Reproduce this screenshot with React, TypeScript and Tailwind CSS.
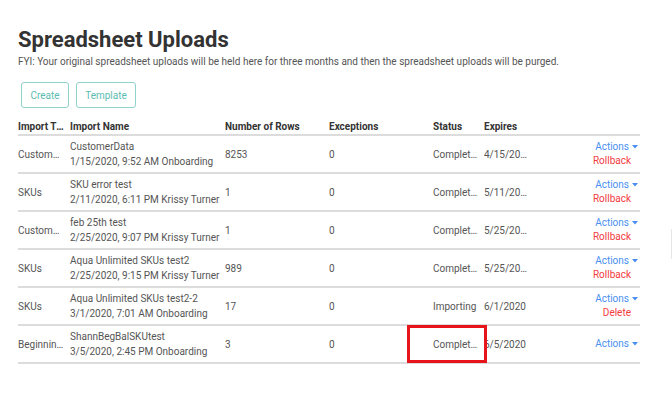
import React from "react";

type Row = {
  type: string;
  name: string;
  meta: string;
  rows: string;
  exceptions: string;
  status: string;
  expires: string;
  action?: string;
};

const rows: Row[] = [
  { type: "CustomerData", name: "CustomerData", meta: "1/15/2020, 9:52 AM Onboarding", rows: "8253", exceptions: "0", status: "Completed", expires: "4/15/2020", action: "Rollback" },
  { type: "SKUs", name: "SKU error test", meta: "2/11/2020, 6:11 PM Krissy Turner", rows: "1", exceptions: "0", status: "Completed", expires: "5/11/2020", action: "Rollback" },
  { type: "CustomerData", name: "feb 25th test", meta: "2/25/2020, 9:07 PM Krissy Turner", rows: "1", exceptions: "0", status: "Completed", expires: "5/25/2020", action: "Rollback" },
  { type: "SKUs", name: "Aqua Unlimited SKUs test2", meta: "2/25/2020, 9:15 PM Krissy Turner", rows: "989", exceptions: "0", status: "Completed", expires: "5/25/2020", action: "Rollback" },
  { type: "SKUs", name: "Aqua Unlimited SKUs test2-2", meta: "3/1/2020, 7:01 AM Onboarding", rows: "17", exceptions: "0", status: "Importing", expires: "6/1/2020", action: "Delete" },
  { type: "Beginning Balances", name: "ShannBegBalSKUtest", meta: "3/5/2020, 2:45 PM Onboarding", rows: "3", exceptions: "0", status: "Completed", expires: "6/5/2020" },
];

// truncated cells, like the original grid
const cut = "whitespace-nowrap overflow-hidden text-ellipsis pr-[6px]";

const App = () => {
  return (
    <div
      className="relative w-[672px] h-[414px] bg-white text-[#555] overflow-hidden"
      style={{ fontFamily: "Roboto, 'Liberation Sans', sans-serif" }}
    >
      <div className="pl-[18px] pr-[32px] pt-[26px]">
        <h1 className="text-[22px] leading-[28px] font-bold text-[#333]">Spreadsheet Uploads</h1>
        <p className="text-[10px] leading-[14px] mt-[1px]">
          FYI: Your original spreadsheet uploads will be held here for three months and then the spreadsheet uploads will be purged.
        </p>

        <div className="flex gap-[7px] ml-[3px] mt-[13px]">
          <button className="h-[26px] w-[48px] border border-[#8fd3ca] rounded-[3px] text-[10px] text-[#5cbcb0]">
            Create
          </button>
          <button className="h-[26px] w-[60px] border border-[#8fd3ca] rounded-[3px] text-[10px] text-[#5cbcb0]">
            Template
          </button>
        </div>

        <table className="w-[622px] table-fixed mt-[13px] text-[10px] border-collapse">
          <colgroup>
            <col className="w-[52px]" />
            <col className="w-[155px]" />
            <col className="w-[104px]" />
            <col className="w-[104px]" />
            <col className="w-[51px]" />
            <col className="w-[56px]" />
            <col />
          </colgroup>
          <thead>
            <tr className="border-b-2 border-[#dcdcdc] text-left text-[#333]">
              <th className={`${cut} font-bold h-[14px] leading-[12px] align-top`}>Import Type</th>
              <th className={`${cut} font-bold leading-[12px] align-top`}>Import Name</th>
              <th className={`${cut} font-bold leading-[12px] align-top`}>Number of Rows</th>
              <th className={`${cut} font-bold leading-[12px] align-top`}>Exceptions</th>
              <th className={`${cut} font-bold leading-[12px] align-top`}>Status</th>
              <th className={`${cut} font-bold leading-[12px] align-top`}>Expires</th>
              <th />
            </tr>
          </thead>
          <tbody>
            {rows.map((r) => (
              <tr key={r.name} className="border-b-2 border-[#dcdcdc] h-[38px]">
                <td className={cut}>{r.type}</td>
                <td className="whitespace-nowrap leading-[15px] pb-[1px]">
                  <div>{r.name}</div>
                  <div>{r.meta}</div>
                </td>
                <td className={cut}>{r.rows}</td>
                <td className={cut}>{r.exceptions}</td>
                <td className={cut}>{r.status}</td>
                <td className="whitespace-nowrap overflow-hidden text-ellipsis pr-[11px]">{r.expires}</td>
                <td className="text-right pr-[2px] leading-[14px]">
                  <div className="text-[#4a8ff0] inline-flex items-center gap-[3px]">
                    Actions
                    <svg width="6" height="4" viewBox="0 0 6 4">
                      <path d="M0 0h6L3 3.5z" fill="#4a8ff0" />
                    </svg>
                  </div>
                  {r.action && <div className="text-[#f33b3e] pr-[7px]">{r.action}</div>}
                </td>
              </tr>
            ))}
          </tbody>
        </table>
      </div>

      <div className="absolute left-[407px] top-[325px] w-[80px] h-[38px] border-[3px] border-[#e8141b]" />
      <div className="absolute left-[671px] top-[229px] w-px h-[30px] bg-[#e6e6e6]" />
    </div>
  );
};

export default App;
